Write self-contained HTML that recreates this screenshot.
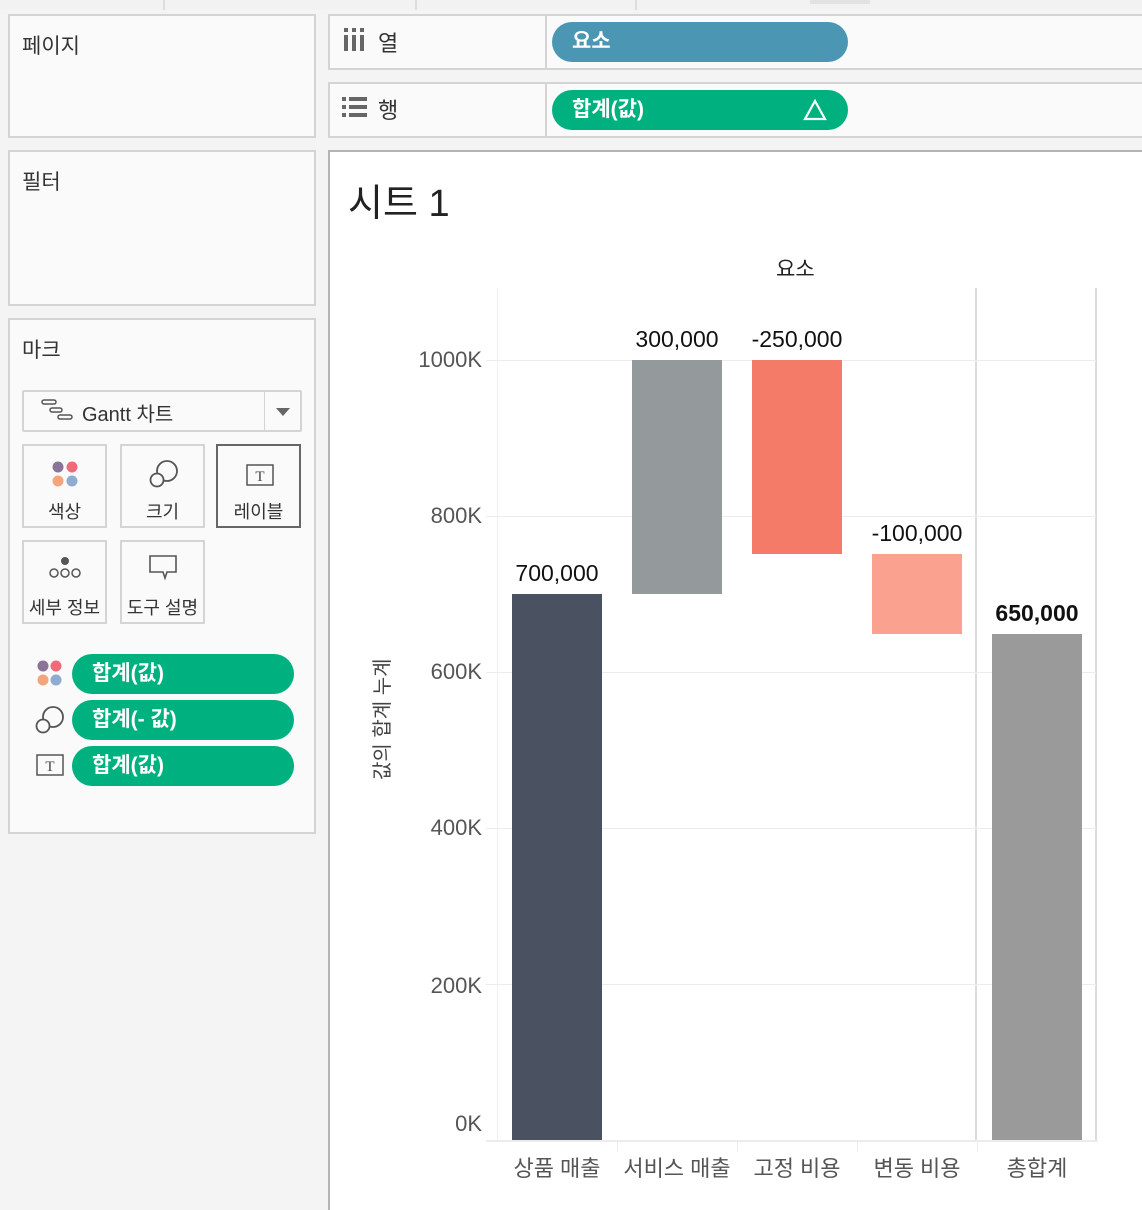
<!DOCTYPE html>
<html><head><meta charset="utf-8"><style>
*{margin:0;padding:0;box-sizing:border-box}
body{width:1142px;height:1200px;background:#f4f4f4;font-family:"Liberation Sans","Noto Sans CJK KR",sans-serif;position:relative;overflow:hidden;color:#333}
.a{position:absolute}
.panel{position:absolute;background:#fafafa;border:2px solid #d4d4d4}
.t{position:absolute;font-size:21px;color:#333}
.pill{position:absolute;border-radius:20px;color:#fff;font-size:21px;font-weight:bold;padding-left:20px;line-height:40px}
.card{position:absolute;width:85px;height:84px;border:2px solid #d4d4d4;background:#fafafa;text-align:center;font-size:18px}
.card span{position:absolute;left:0;right:0;top:52px}
.lab{position:absolute;font-size:23px;color:#111;text-align:center;width:120px}
.yl{position:absolute;font-size:22px;color:#555;right:660px;text-align:right}
.xl{position:absolute;font-size:22px;color:#555;text-align:center;width:120px;top:1151px}
.bar{position:absolute;width:90px}
.g{position:absolute;left:486px;width:610px;height:1px;background:#ececec}
</style></head><body>
<div class="a" style="left:0;top:0;width:1142px;height:10px;background:#f2f2f2"></div>
<div class="a" style="left:163px;top:0;width:2px;height:10px;background:#ddd"></div>
<div class="a" style="left:415px;top:0;width:2px;height:10px;background:#ddd"></div>
<div class="a" style="left:635px;top:0;width:2px;height:10px;background:#ddd"></div>
<div class="a" style="left:810px;top:0;width:60px;height:4px;background:#e2e2e2"></div>

<div class="panel" style="left:8px;top:14px;width:308px;height:124px"><div class="t" style="left:12px;top:14px">페이지</div></div>
<div class="panel" style="left:8px;top:150px;width:308px;height:156px"><div class="t" style="left:12px;top:14px">필터</div></div>
<div class="panel" style="left:8px;top:318px;width:308px;height:516px"><div class="t" style="left:12px;top:14px">마크</div></div>

<div class="a" style="left:22px;top:390px;width:280px;height:42px;border:2px solid #d4d4d4;background:#fafafa;border-radius:2px"></div>
<div class="a" style="left:264px;top:392px;width:1px;height:38px;background:#d4d4d4"></div>
<div class="a" style="left:276px;top:408px;border-left:7px solid transparent;border-right:7px solid transparent;border-top:8px solid #666"></div>
<svg class="a" style="left:40px;top:398px" width="36" height="24"><rect x="2" y="2" width="14" height="4" rx="2" fill="none" stroke="#555" stroke-width="1.5"/><rect x="10" y="10" width="12" height="4" rx="2" fill="none" stroke="#555" stroke-width="1.5"/><rect x="18" y="17" width="14" height="4" rx="2" fill="none" stroke="#555" stroke-width="1.5"/></svg>
<div class="t" style="left:82px;top:398px;font-size:20px">Gantt 차트</div>

<div class="card" style="left:22px;top:444px"><svg class="a" style="left:27px;top:14px" width="30" height="30"><circle cx="7" cy="7" r="5.5" fill="#8a7399"/><circle cx="21" cy="7" r="5.5" fill="#f06a7a"/><circle cx="7" cy="21" r="5.5" fill="#f3a57c"/><circle cx="21" cy="21" r="5.5" fill="#8eabd0"/></svg><span>색상</span></div>
<div class="card" style="left:120px;top:444px"><svg class="a" style="left:26px;top:12px" width="32" height="32"><circle cx="19" cy="13" r="10" fill="none" stroke="#555" stroke-width="1.8"/><circle cx="9" cy="22" r="6.5" fill="#fafafa" stroke="#555" stroke-width="1.8"/></svg><span>크기</span></div>
<div class="card" style="left:216px;top:444px;border-color:#666"><svg class="a" style="left:28px;top:18px" width="28" height="24"><rect x="1" y="1" width="26" height="20" fill="none" stroke="#555" stroke-width="1.5"/><text x="14" y="17" font-size="15" text-anchor="middle" font-family="Liberation Serif" fill="#444">T</text></svg><span>레이블</span></div>
<div class="card" style="left:22px;top:540px"><svg class="a" style="left:24px;top:14px" width="36" height="26"><circle cx="17" cy="5" r="4" fill="#555"/><circle cx="6" cy="17" r="4" fill="none" stroke="#555" stroke-width="1.5"/><circle cx="17" cy="17" r="4" fill="none" stroke="#555" stroke-width="1.5"/><circle cx="28" cy="17" r="4" fill="none" stroke="#555" stroke-width="1.5"/></svg><span>세부 정보</span></div>
<div class="card" style="left:120px;top:540px"><svg class="a" style="left:26px;top:12px" width="32" height="30"><path d="M2 2H28V18H19L17 24L15 18H2Z" fill="none" stroke="#555" stroke-width="1.6"/></svg><span>도구 설명</span></div>

<svg class="a" style="left:36px;top:660px" width="28" height="28"><circle cx="7" cy="6" r="5.5" fill="#8a7399"/><circle cx="20" cy="6" r="5.5" fill="#f06a7a"/><circle cx="7" cy="20" r="5.5" fill="#f3a57c"/><circle cx="20" cy="20" r="5.5" fill="#8eabd0"/></svg>
<svg class="a" style="left:34px;top:704px" width="32" height="32"><circle cx="19" cy="13" r="10" fill="none" stroke="#555" stroke-width="1.8"/><circle cx="9" cy="22" r="6.5" fill="#fafafa" stroke="#555" stroke-width="1.8"/></svg>
<svg class="a" style="left:36px;top:754px" width="28" height="24"><rect x="1" y="1" width="26" height="20" fill="none" stroke="#555" stroke-width="1.5"/><text x="14" y="17" font-size="15" text-anchor="middle" font-family="Liberation Serif" fill="#444">T</text></svg>
<div class="pill" style="left:72px;top:654px;width:222px;background:#00b180">합계(값)</div>
<div class="pill" style="left:72px;top:700px;width:222px;background:#00b180">합계(- 값)</div>
<div class="pill" style="left:72px;top:746px;width:222px;background:#00b180">합계(값)</div>

<div class="panel" style="left:328px;top:14px;width:816px;height:56px"></div>
<div class="a" style="left:545px;top:16px;width:2px;height:52px;background:#d4d4d4"></div>
<svg class="a" style="left:342px;top:28px" width="24" height="26"><rect x="2" y="0" width="4" height="4" fill="#666"/><rect x="10" y="0" width="4" height="4" fill="#666"/><rect x="18" y="0" width="4" height="4" fill="#666"/><rect x="2" y="7" width="4" height="16" fill="#666"/><rect x="10" y="7" width="4" height="16" fill="#666"/><rect x="18" y="7" width="4" height="16" fill="#666"/></svg>
<div class="t" style="left:378px;top:26px;font-size:22px">열</div>
<div class="pill" style="left:552px;top:22px;width:296px;background:#4a96b3;line-height:40px">요소</div>

<div class="panel" style="left:328px;top:82px;width:816px;height:56px"></div>
<div class="a" style="left:545px;top:84px;width:2px;height:52px;background:#d4d4d4"></div>
<svg class="a" style="left:342px;top:97px" width="26" height="22"><rect x="0" y="0" width="4" height="4" fill="#666"/><rect x="7" y="0" width="18" height="4" fill="#666"/><rect x="0" y="8" width="4" height="4" fill="#666"/><rect x="7" y="8" width="18" height="4" fill="#666"/><rect x="0" y="16" width="4" height="4" fill="#666"/><rect x="7" y="16" width="18" height="4" fill="#666"/></svg>
<div class="t" style="left:378px;top:93px;font-size:22px">행</div>
<div class="pill" style="left:552px;top:90px;width:296px;background:#00b180">합계(값)</div>
<svg class="a" style="left:803px;top:99px" width="24" height="22"><path d="M12 2L22 20H2Z" fill="none" stroke="#fff" stroke-width="2.2"/></svg>

<div class="a" style="left:328px;top:150px;width:820px;height:1060px;background:#fff;border-left:2px solid #b4b4b4;border-top:2px solid #b4b4b4"></div>
<div class="a" style="left:348px;top:172px;font-size:38px;color:#222">시트 1</div>
<div class="a" style="left:776px;top:253px;font-size:21px;color:#222">요소</div>

<div class="a" style="left:497px;top:288px;width:1px;height:852px;background:#f0f0f0"></div>
<div class="a" style="left:975px;top:288px;width:2px;height:852px;background:#dcdcdc"></div>
<div class="a" style="left:1095px;top:288px;width:2px;height:852px;background:#dcdcdc"></div>
<div class="g" style="top:360px"></div><div class="g" style="top:516px"></div><div class="g" style="top:672px"></div><div class="g" style="top:828px"></div><div class="g" style="top:984px"></div>
<div class="a" style="left:486px;top:1140px;width:612px;height:2px;background:#ececec"></div>
<div class="a" style="left:617px;top:1142px;width:1px;height:10px;background:#ececec"></div>
<div class="a" style="left:737px;top:1142px;width:1px;height:10px;background:#ececec"></div>
<div class="a" style="left:857px;top:1142px;width:1px;height:10px;background:#ececec"></div>
<div class="a" style="left:977px;top:1142px;width:1px;height:10px;background:#ececec"></div>

<div class="yl" style="top:347px">1000K</div><div class="yl" style="top:503px">800K</div><div class="yl" style="top:659px">600K</div><div class="yl" style="top:815px">400K</div><div class="yl" style="top:973px">200K</div><div class="yl" style="top:1111px">0K</div>
<div class="a" style="left:366px;top:780px;transform:rotate(-90deg);transform-origin:0 0;font-size:20px;color:#444;white-space:nowrap">값의 합계 누계</div>

<div class="bar" style="left:512px;top:594px;height:546px;background:#4a5160"></div>
<div class="bar" style="left:632px;top:360px;height:234px;background:#949a9c"></div>
<div class="bar" style="left:752px;top:360px;height:194px;background:#f47b67"></div>
<div class="bar" style="left:872px;top:554px;height:80px;background:#fba18f"></div>
<div class="bar" style="left:992px;top:634px;height:506px;background:#9a9a9a"></div>

<div class="lab" style="left:497px;top:560px">700,000</div>
<div class="lab" style="left:617px;top:326px">300,000</div>
<div class="lab" style="left:737px;top:326px">-250,000</div>
<div class="lab" style="left:857px;top:520px">-100,000</div>
<div class="lab" style="left:977px;top:600px;font-weight:bold">650,000</div>

<div class="xl" style="left:497px">상품 매출</div>
<div class="xl" style="left:617px">서비스 매출</div>
<div class="xl" style="left:737px">고정 비용</div>
<div class="xl" style="left:857px">변동 비용</div>
<div class="xl" style="left:977px">총합계</div>
</body></html>
